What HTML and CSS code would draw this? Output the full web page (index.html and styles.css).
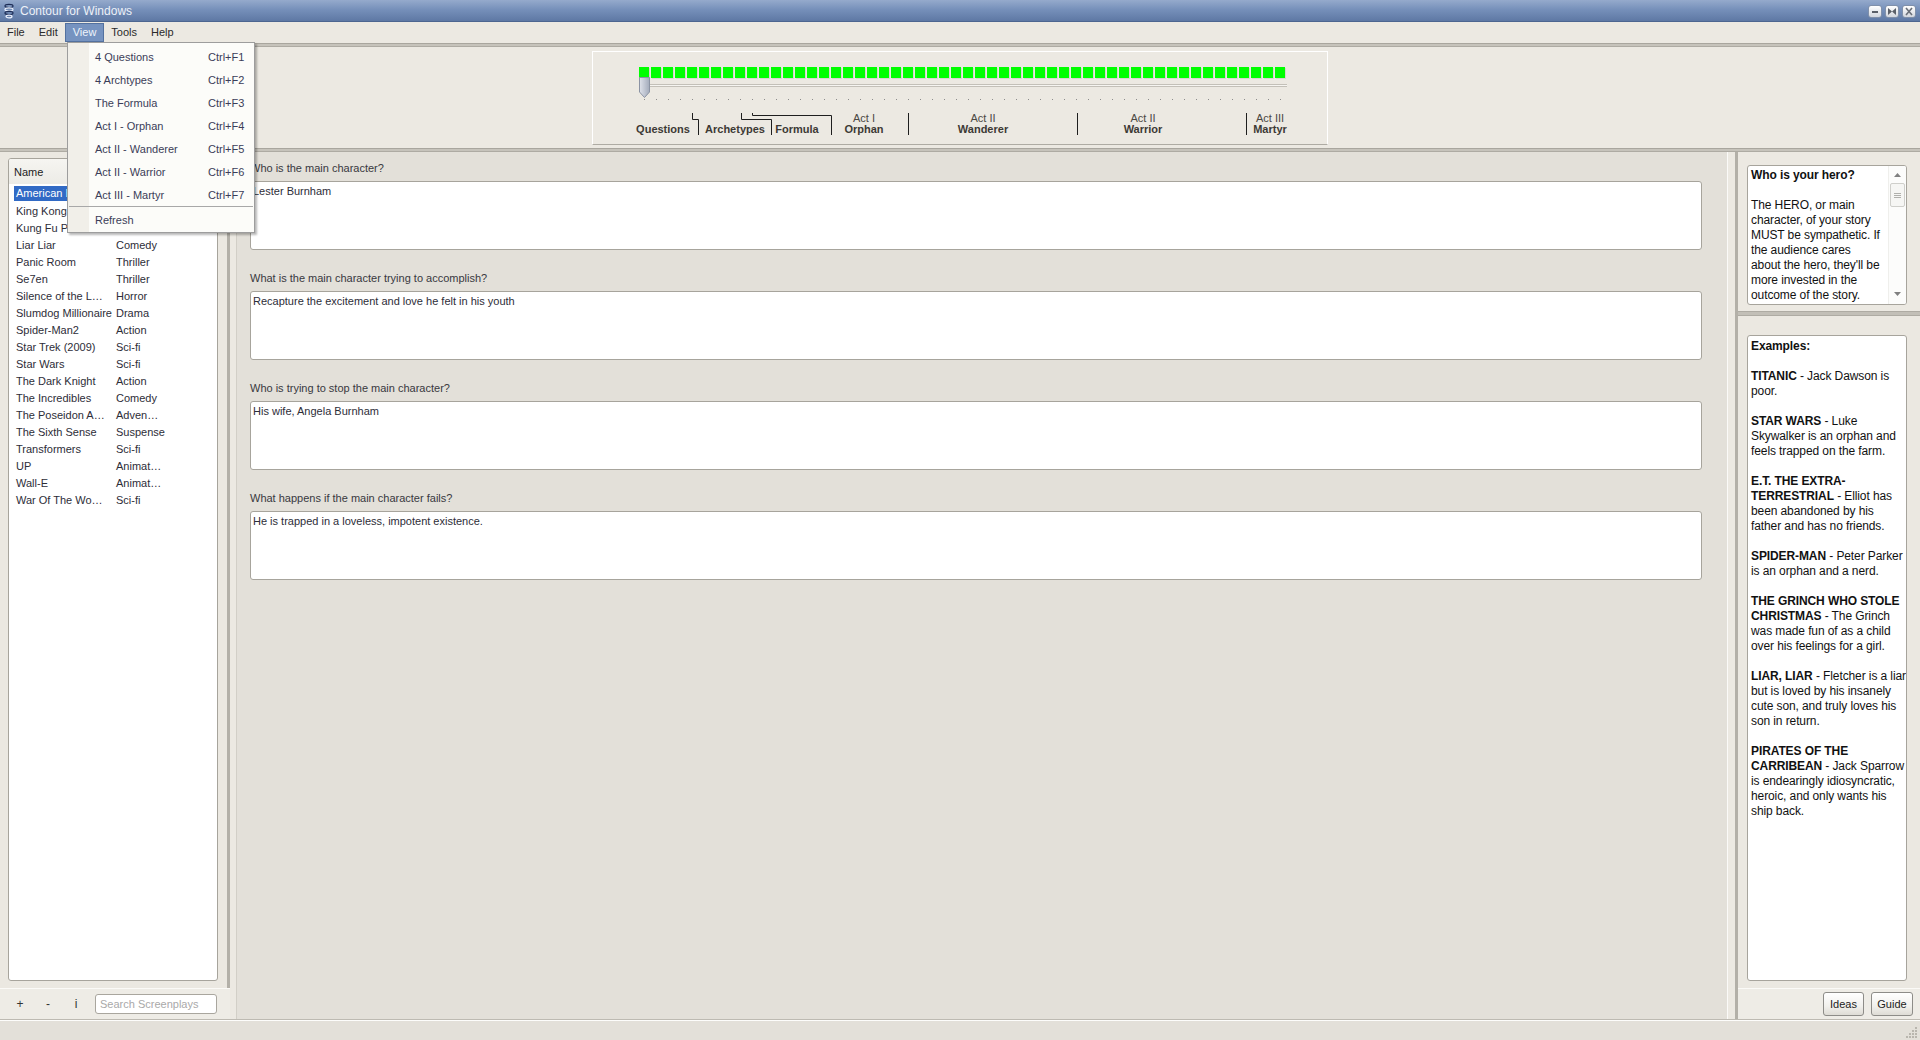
FILE: index.html
```html
<!DOCTYPE html>
<html>
<head>
<meta charset="utf-8">
<title>Contour for Windows</title>
<link rel="stylesheet" href="styles.css">
</head>
<body>
<div class="window">
  <div class="titlebar">
    <svg class="app-icon" viewBox="0 0 10 16" width="10" height="16">
      <ellipse cx="5" cy="3" rx="4" ry="1.6" fill="none" stroke="#1d2c55" stroke-width="1.2"/>
      <ellipse cx="5" cy="6.5" rx="4" ry="1.6" fill="none" stroke="#e8eefc" stroke-width="1.2"/>
      <ellipse cx="5" cy="10" rx="4" ry="1.6" fill="none" stroke="#1d2c55" stroke-width="1.2"/>
      <ellipse cx="5" cy="13.5" rx="3" ry="1.4" fill="none" stroke="#e8eefc" stroke-width="1.2"/>
    </svg>
    <span class="title">Contour for Windows</span>
    <div class="winbtns">
      <span class="winbtn"><svg viewBox="0 0 12 11" width="12" height="11"><rect x="3" y="5" width="6" height="2" fill="#5a5f68"/></svg></span>
      <span class="winbtn"><svg viewBox="0 0 12 11" width="12" height="11"><path d="M2 2 L6 5.5 L2 9 Z M10 2 L6 5.5 L10 9 Z" fill="#5a5f68"/></svg></span>
      <span class="winbtn"><svg viewBox="0 0 12 11" width="12" height="11"><path d="M3 2 L9 9 M9 2 L3 9" stroke="#6a6f78" stroke-width="1.6"/></svg></span>
    </div>
  </div>

  <div class="menubar">
    <span class="menu-item">File</span>
    <span class="menu-item">Edit</span>
    <span class="menu-item active">View</span>
    <span class="menu-item">Tools</span>
    <span class="menu-item">Help</span>
  </div>

  <div class="hdivider"></div>

  <div class="toppanel">
    <div class="timeline">
      <div class="beats">
        <span class="beat"></span><span class="beat"></span><span class="beat"></span><span class="beat"></span><span class="beat"></span><span class="beat"></span><span class="beat"></span><span class="beat"></span><span class="beat"></span><span class="beat"></span>
        <span class="beat"></span><span class="beat"></span><span class="beat"></span><span class="beat"></span><span class="beat"></span><span class="beat"></span><span class="beat"></span><span class="beat"></span><span class="beat"></span><span class="beat"></span>
        <span class="beat"></span><span class="beat"></span><span class="beat"></span><span class="beat"></span><span class="beat"></span><span class="beat"></span><span class="beat"></span><span class="beat"></span><span class="beat"></span><span class="beat"></span>
        <span class="beat"></span><span class="beat"></span><span class="beat"></span><span class="beat"></span><span class="beat"></span><span class="beat"></span><span class="beat"></span><span class="beat"></span><span class="beat"></span><span class="beat"></span>
        <span class="beat"></span><span class="beat"></span><span class="beat"></span><span class="beat"></span><span class="beat"></span><span class="beat"></span><span class="beat"></span><span class="beat"></span><span class="beat"></span><span class="beat"></span>
        <span class="beat"></span><span class="beat"></span><span class="beat"></span><span class="beat"></span>
      </div>
      <div class="track"></div>
      <div class="ticks">
        <span class="tick"></span><span class="tick"></span><span class="tick"></span><span class="tick"></span><span class="tick"></span><span class="tick"></span><span class="tick"></span><span class="tick"></span><span class="tick"></span><span class="tick"></span>
        <span class="tick"></span><span class="tick"></span><span class="tick"></span><span class="tick"></span><span class="tick"></span><span class="tick"></span><span class="tick"></span><span class="tick"></span><span class="tick"></span><span class="tick"></span>
        <span class="tick"></span><span class="tick"></span><span class="tick"></span><span class="tick"></span><span class="tick"></span><span class="tick"></span><span class="tick"></span><span class="tick"></span><span class="tick"></span><span class="tick"></span>
        <span class="tick"></span><span class="tick"></span><span class="tick"></span><span class="tick"></span><span class="tick"></span><span class="tick"></span><span class="tick"></span><span class="tick"></span><span class="tick"></span><span class="tick"></span>
        <span class="tick"></span><span class="tick"></span><span class="tick"></span><span class="tick"></span><span class="tick"></span><span class="tick"></span><span class="tick"></span><span class="tick"></span><span class="tick"></span><span class="tick"></span>
        <span class="tick"></span><span class="tick"></span><span class="tick"></span><span class="tick"></span>
      </div>
      <svg class="thumb" viewBox="0 0 11 21" width="11" height="21">
        <defs>
          <linearGradient id="tg" x1="0" y1="0" x2="1" y2="0">
            <stop offset="0" stop-color="#dfe2ea"/>
            <stop offset="1" stop-color="#a3abbb"/>
          </linearGradient>
        </defs>
        <path d="M0.5 0.5 H10.5 V15 L5.5 20.5 L0.5 15 Z" fill="url(#tg)" stroke="#8b93a3"/>
      </svg>
      <svg class="brackets" width="734" height="92" viewBox="0 0 734 92">
        <path d="M99.5 61 V67.5 H105.5 V83" fill="none" stroke="#1e1e1e"/>
        <path d="M148.5 61 V67.5 H178.5 V83" fill="none" stroke="#1e1e1e"/>
        <path d="M159.5 61 V63.5 H238.5 V83" fill="none" stroke="#1e1e1e"/>
        <path d="M315.5 61 V83" fill="none" stroke="#1e1e1e"/>
        <path d="M484.5 61 V83" fill="none" stroke="#1e1e1e"/>
        <path d="M653.5 61 V83" fill="none" stroke="#1e1e1e"/>
      </svg>
      <div class="tl-label tl-q"><b>Questions</b></div>
      <div class="tl-label tl-a"><b>Archetypes</b></div>
      <div class="tl-label tl-f"><b>Formula</b></div>
      <div class="tl-label tl-o"><span class="act">Act I</span><b>Orphan</b></div>
      <div class="tl-label tl-wa"><span class="act">Act II</span><b>Wanderer</b></div>
      <div class="tl-label tl-wr"><span class="act">Act II</span><b>Warrior</b></div>
      <div class="tl-label tl-m"><span class="act">Act III</span><b>Martyr</b></div>
    </div>
  </div>

  <div class="hdivider"></div>

  <div class="main">
    <div class="leftpanel">
      <div class="left-body">
        <div class="listbox">
          <div class="list-head">
            <span class="col-name">Name</span>
          </div>
          <div class="rows">
            <div class="row"><span class="col-name"><span class="sel">American Beauty</span></span></div>
            <div class="row"><span class="col-name">King Kong</span></div>
            <div class="row"><span class="col-name">Kung Fu Panda</span></div>
            <div class="row"><span class="col-name">Liar Liar</span><span class="col-genre">Comedy</span></div>
            <div class="row"><span class="col-name">Panic Room</span><span class="col-genre">Thriller</span></div>
            <div class="row"><span class="col-name">Se7en</span><span class="col-genre">Thriller</span></div>
            <div class="row"><span class="col-name">Silence of the L…</span><span class="col-genre">Horror</span></div>
            <div class="row"><span class="col-name">Slumdog Millionaire</span><span class="col-genre">Drama</span></div>
            <div class="row"><span class="col-name">Spider-Man2</span><span class="col-genre">Action</span></div>
            <div class="row"><span class="col-name">Star Trek (2009)</span><span class="col-genre">Sci-fi</span></div>
            <div class="row"><span class="col-name">Star Wars</span><span class="col-genre">Sci-fi</span></div>
            <div class="row"><span class="col-name">The Dark Knight</span><span class="col-genre">Action</span></div>
            <div class="row"><span class="col-name">The Incredibles</span><span class="col-genre">Comedy</span></div>
            <div class="row"><span class="col-name">The Poseidon A…</span><span class="col-genre">Adven…</span></div>
            <div class="row"><span class="col-name">The Sixth Sense</span><span class="col-genre">Suspense</span></div>
            <div class="row"><span class="col-name">Transformers</span><span class="col-genre">Sci-fi</span></div>
            <div class="row"><span class="col-name">UP</span><span class="col-genre">Animat…</span></div>
            <div class="row"><span class="col-name">Wall-E</span><span class="col-genre">Animat…</span></div>
            <div class="row"><span class="col-name">War Of The Wo…</span><span class="col-genre">Sci-fi</span></div>
          </div>
        </div>
      </div>
      <div class="left-toolbar">
        <span class="tb-btn">+</span>
        <span class="tb-btn">-</span>
        <span class="tb-btn">i</span>
        <div class="search">Search Screenplays</div>
      </div>
    </div>

    <div class="splitter-l"></div>

    <div class="center">
      <div class="q-label">Who is the main character?</div>
      <div class="q-box">Lester Burnham</div>
      <div class="q-label">What is the main character trying to accomplish?</div>
      <div class="q-box">Recapture the excitement and love he felt in his youth</div>
      <div class="q-label">Who is trying to stop the main character?</div>
      <div class="q-box">His wife, Angela Burnham</div>
      <div class="q-label">What happens if the main character fails?</div>
      <div class="q-box">He is trapped in a loveless, impotent existence.</div>
    </div>

    <div class="splitter-r"></div>

    <div class="rightpanel">
      <div class="r-top">
        <div class="help-box">
          <div class="help-text">
            <b>Who is your hero?</b><br><br>
            The HERO, or main<br>
            character, of your story<br>
            MUST be sympathetic. If<br>
            the audience cares<br>
            about the hero, they'll be<br>
            more invested in the<br>
            outcome of the story.
          </div>
          <div class="vscroll">
            <svg class="arrow-up" viewBox="0 0 7 4" width="7" height="4"><path d="M0 4 L3.5 0 L7 4 Z" fill="#808080"/></svg>
            <div class="vthumb"><span></span><span></span><span></span></div>
            <svg class="arrow-down" viewBox="0 0 7 4" width="7" height="4"><path d="M0 0 L3.5 4 L7 0 Z" fill="#808080"/></svg>
          </div>
        </div>
      </div>
      <div class="r-sep"></div>
      <div class="r-bottom">
        <div class="ex-box">
          <b>Examples:</b><br><br>
          <b>TITANIC</b> - Jack Dawson is<br>
          poor.<br><br>
          <b>STAR WARS</b> - Luke<br>
          Skywalker is an orphan and<br>
          feels trapped on the farm.<br><br>
          <b>E.T. THE EXTRA-<br>TERRESTRIAL</b> - Elliot has<br>
          been abandoned by his<br>
          father and has no friends.<br><br>
          <b>SPIDER-MAN</b> - Peter Parker<br>
          is an orphan and a nerd.<br><br>
          <b>THE GRINCH WHO STOLE<br>CHRISTMAS</b> - The Grinch<br>
          was made fun of as a child<br>
          over his feelings for a girl.<br><br>
          <b>LIAR, LIAR</b> - Fletcher is a liar<br>
          but is loved by his insanely<br>
          cute son, and truly loves his<br>
          son in return.<br><br>
          <b>PIRATES OF THE<br>CARRIBEAN</b> - Jack Sparrow<br>
          is endearingly idiosyncratic,<br>
          heroic, and only wants his<br>
          ship back.
        </div>
      </div>
      <div class="r-toolbar">
        <span class="btn btn-ideas">Ideas</span>
        <span class="btn btn-guide">Guide</span>
      </div>
    </div>
  </div>

  <div class="statusbar">
    <svg class="grip" viewBox="0 0 12 12" width="12" height="12">
      <g fill="#b9b6ae">
        <rect x="9" y="1" width="2" height="2"/>
        <rect x="6" y="4" width="2" height="2"/><rect x="9" y="4" width="2" height="2"/>
        <rect x="3" y="7" width="2" height="2"/><rect x="6" y="7" width="2" height="2"/><rect x="9" y="7" width="2" height="2"/>
        <rect x="0" y="10" width="2" height="2"/><rect x="3" y="10" width="2" height="2"/><rect x="6" y="10" width="2" height="2"/><rect x="9" y="10" width="2" height="2"/>
      </g>
    </svg>
  </div>

  <div class="dropdown">
    <div class="dd-item"><span>4 Questions</span><span>Ctrl+F1</span></div>
    <div class="dd-item"><span>4 Archtypes</span><span>Ctrl+F2</span></div>
    <div class="dd-item"><span>The Formula</span><span>Ctrl+F3</span></div>
    <div class="dd-item"><span>Act I - Orphan</span><span>Ctrl+F4</span></div>
    <div class="dd-item"><span>Act II - Wanderer</span><span>Ctrl+F5</span></div>
    <div class="dd-item"><span>Act II - Warrior</span><span>Ctrl+F6</span></div>
    <div class="dd-item"><span>Act III - Martyr</span><span>Ctrl+F7</span></div>
    <div class="dd-sep"></div>
    <div class="dd-item"><span>Refresh</span><span></span></div>
  </div>
</div>
</body>
</html>
```

FILE: styles.css
```css
* { box-sizing: border-box; }

html, body {
  margin: 0;
  padding: 0;
}

body {
  width: 1920px;
  height: 1040px;
  overflow: hidden;
  background: #ece9e2;
  font-family: "Liberation Sans", Arial, sans-serif;
  font-size: 11px;
  color: #2d2d38;
}

.window {
  position: relative;
  width: 1920px;
  height: 1040px;
  display: flex;
  flex-direction: column;
}

/* ---------- title bar ---------- */
.titlebar {
  height: 22px;
  flex: none;
  display: flex;
  align-items: center;
  padding-left: 4px;
  background: linear-gradient(#95aacc, #7690ba 45%, #5e78a4);
  border-bottom: 1px solid #4d6690;
}

.app-icon { margin-right: 6px; }

.title {
  color: #edf1f8;
  font-size: 12px;
}

.winbtns {
  margin-left: auto;
  display: flex;
  gap: 3px;
  padding-right: 4px;
  padding-top: 1px;
}

.winbtn {
  width: 14px;
  height: 13px;
  border: 1px solid #8090aa;
  border-radius: 3px;
  background: linear-gradient(#ffffff, #d2d6de);
  display: flex;
  align-items: center;
  justify-content: center;
}

/* ---------- menu bar ---------- */
.menubar {
  height: 21px;
  flex: none;
  display: flex;
  align-items: center;
  background: #ece9e2;
  color: #2a2a2a;
}

.menu-item {
  height: 19px;
  line-height: 17px;
  padding: 0 6px;
  border: 1px solid transparent;
}

.menu-item.active {
  background: #7693c0;
  border-color: #53719f;
  color: #eef3fb;
  padding: 0 7px;
}

.hdivider {
  height: 4px;
  flex: none;
  background: #c6c3bb;
  border-top: 1px solid #a9a69e;
  border-bottom: 1px solid #aeaba3;
}

/* ---------- timeline ---------- */
.toppanel {
  height: 101px;
  flex: none;
  display: flex;
  justify-content: center;
  align-items: flex-start;
  padding-top: 4px;
  background: #ece9e2;
}

.timeline {
  position: relative;
  width: 736px;
  height: 94px;
  border: 1px solid #ffffff;
  border-bottom-color: #aeaba3;
  padding: 15px 0 0 46px;
}

.beats {
  display: flex;
  gap: 2px;
}

.beat {
  width: 10px;
  height: 11px;
  background: #00ff00;
  box-shadow: 1px 1px 0 #d8d6cf;
}

.track {
  width: 648px;
  height: 3px;
  margin-top: 6px;
  border-top: 1px solid #c3c0b8;
  border-bottom: 1px solid #c3c0b8;
  background: #f6f5f1;
}

.ticks {
  display: flex;
  gap: 11px;
  margin-top: 12px;
  margin-left: 5px;
}

.tick {
  width: 1px;
  height: 1px;
  background: #8c8c8c;
}

.thumb {
  position: absolute;
  left: 46px;
  top: 25px;
}

.brackets {
  position: absolute;
  left: 0;
  top: 0;
}

.tl-label {
  position: absolute;
  top: 60px;
  height: 23px;
  display: flex;
  flex-direction: column;
  justify-content: flex-end;
  align-items: center;
  transform: translateX(-50%);
  line-height: 11px;
  white-space: nowrap;
  color: #3d3a35;
}

.tl-label b { font-weight: bold; }
.tl-label .act { color: #4b4843; }

.tl-q  { left: 70px; }
.tl-a  { left: 142px; }
.tl-f  { left: 204px; }
.tl-o  { left: 271px; }
.tl-wa { left: 390px; }
.tl-wr { left: 550px; }
.tl-m  { left: 677px; }

/* ---------- main ---------- */
.main {
  height: 867px;
  flex: none;
  display: flex;
}

.leftpanel {
  width: 230px;
  flex: none;
  display: flex;
  flex-direction: column;
}

.left-body {
  flex: 1;
  min-height: 0;
  border-right: 3px solid #b3b0a8;
  padding: 6px 9px 7px 8px;
  background: #ebe8e1;
}

.listbox {
  height: 100%;
  background: #ffffff;
  border: 1px solid #a7a49c;
  border-radius: 3px;
  overflow: hidden;
}

.list-head {
  height: 25px;
  display: flex;
  align-items: center;
  background: linear-gradient(#f6f5f1, #ecebe6);
  color: #222;
}

.list-head .col-name { padding-left: 5px; }

.col-name {
  width: 107px;
  flex: none;
  padding-left: 7px;
  white-space: nowrap;
  overflow: hidden;
}

.col-genre {
  white-space: nowrap;
}

.rows { padding-top: 1px; }

.row {
  height: 17px;
  display: flex;
  align-items: center;
}

.sel {
  display: inline-block;
  background: #316ac5;
  color: #ffffff;
  line-height: 15px;
  padding: 0 2px;
  margin-left: -2px;
}

.left-toolbar {
  height: 31px;
  flex: none;
  display: flex;
  align-items: center;
  padding-left: 6px;
  background: #eeece6;
  border-top: 1px solid #fbfaf7;
}

.tb-btn {
  width: 28px;
  text-align: center;
  font-size: 12px;
  color: #333;
}

.search {
  margin-left: 5px;
  width: 122px;
  height: 20px;
  border: 1px solid #a9a69e;
  border-radius: 3px;
  background: #ffffff;
  color: #a9a9a9;
  padding-left: 4px;
  line-height: 18px;
}

.splitter-l {
  width: 6px;
  flex: none;
  background: #ece9e2;
}

.splitter-r {
  width: 7px;
  flex: none;
  background: #ece9e2;
}

/* ---------- center ---------- */
.center {
  flex: 1;
  min-width: 0;
  background: #e3e0d9;
  border-left: 1px solid #d2cfc7;
  border-right: 1px solid #fbfaf8;
  padding: 9px 25px 0 13px;
}

.q-label {
  height: 14px;
  line-height: 14px;
  margin-bottom: 6px;
  color: #383840;
}

.q-box {
  height: 69px;
  background: #ffffff;
  border: 1px solid #a7a49c;
  border-radius: 3px;
  padding: 2px 2px;
  line-height: 14px;
  margin-bottom: 21px;
  color: #2d2d38;
}

/* ---------- right ---------- */
.rightpanel {
  width: 185px;
  flex: none;
  display: flex;
  flex-direction: column;
  border-left: 3px solid #b3b0a8;
}

.r-top {
  height: 159px;
  flex: none;
  padding: 13px 13px 6px 9px;
  background: #ece9e2;
}

.help-box, .ex-box {
  font-size: 12px;
  line-height: 15px;
  color: #111;
  background: #ffffff;
  border: 1px solid #a7a49c;
  border-radius: 3px;
  letter-spacing: -0.1px;
}

.help-box {
  position: relative;
  height: 100%;
  overflow: hidden;
  padding: 2px 20px 0 3px;
}

.help-text { white-space: nowrap; }

.vscroll {
  position: absolute;
  right: 0;
  top: 0;
  bottom: 0;
  width: 18px;
  background: #fcfcfb;
  border-left: 1px solid #efefec;
}

.arrow-up {
  position: absolute;
  left: 5px;
  top: 7px;
}

.arrow-down {
  position: absolute;
  left: 5px;
  bottom: 8px;
}

.vthumb {
  position: absolute;
  left: 1px;
  top: 17px;
  width: 15px;
  height: 24px;
  border: 1px solid #cfcfcb;
  border-radius: 2px;
  background: #f6f6f4;
  display: flex;
  flex-direction: column;
  align-items: center;
  justify-content: center;
  gap: 1px;
}

.vthumb span {
  width: 7px;
  height: 1px;
  background: #b0b0ac;
}

.r-sep {
  height: 5px;
  flex: none;
  background: #c2bfb7;
  border-top: 1px solid #aeaba3;
  border-bottom: 1px solid #aeaba3;
}

.r-bottom {
  flex: 1;
  min-height: 0;
  padding: 19px 13px 7px 9px;
  background: #ebe8e1;
}

.ex-box {
  height: 100%;
  padding: 3px 2px 3px 3px;
  white-space: nowrap;
  overflow: hidden;
}

.r-toolbar {
  height: 31px;
  flex: none;
  display: flex;
  justify-content: flex-end;
  align-items: center;
  gap: 7px;
  padding-right: 7px;
  background: #eeece6;
  border-top: 1px solid #fbfaf7;
}

.btn {
  height: 24px;
  line-height: 22px;
  text-align: center;
  border: 1px solid #8d8c88;
  border-radius: 3px;
  background: linear-gradient(#ffffff, #f1f0ec 60%, #dedcd5);
  color: #222;
}

.btn-ideas { width: 41px; }
.btn-guide { width: 42px; }

/* ---------- status ---------- */
.statusbar {
  height: 21px;
  flex: none;
  position: relative;
  background: #e3e0d9;
  border-top: 1px solid #bdbab2;
  box-shadow: inset 0 1px 0 #fdfdfb;
}

.grip {
  position: absolute;
  right: 2px;
  bottom: 2px;
}

/* ---------- dropdown ---------- */
.dropdown {
  position: absolute;
  left: 67px;
  top: 42px;
  width: 188px;
  height: 191px;
  padding-top: 2px;
  background: linear-gradient(to right, #f1efe9 21px, #fcfcf9 21px);
  border: 1px solid #9d9d9d;
  box-shadow: 2px 2px 2px rgba(0, 0, 0, 0.28);
  color: #3b3d58;
}

.dd-item {
  height: 23px;
  display: grid;
  grid-template-columns: 113px auto;
  align-items: center;
  padding-left: 27px;
  white-space: nowrap;
}

.dd-sep {
  height: 1px;
  margin: 0 1px 1px 1px;
  background: #a8a8a8;
}
```
